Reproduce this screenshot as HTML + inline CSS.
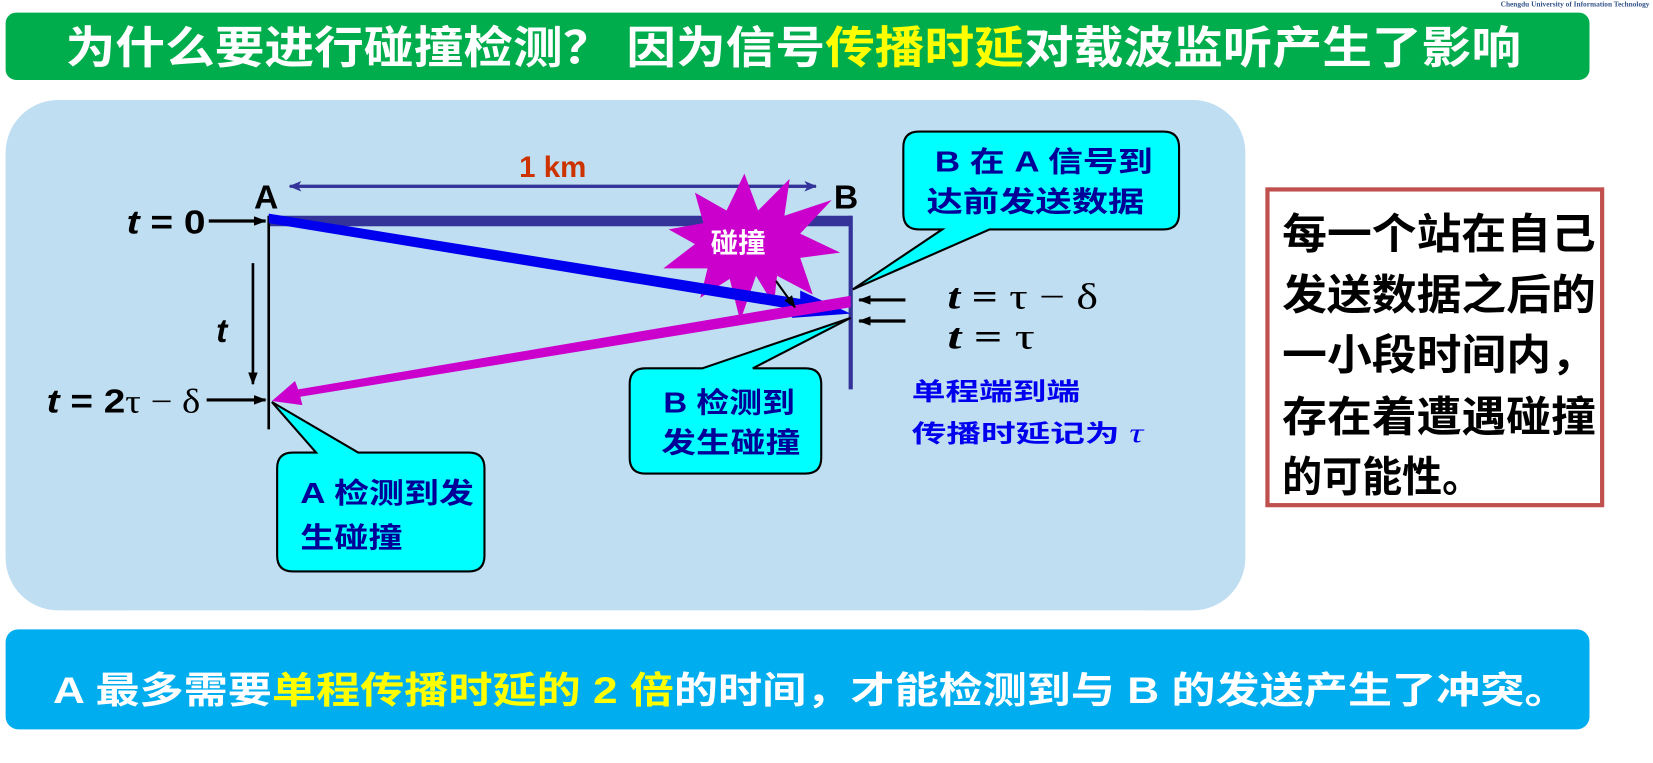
<!DOCTYPE html>
<html><head><meta charset="utf-8"><style>
html,body{margin:0;padding:0;background:#fff;width:1653px;height:763px;overflow:hidden}
svg{display:block}
.cj{font-family:"Liberation Sans","Noto Sans CJK SC",sans-serif;font-weight:bold}
.sr{font-family:"Liberation Serif","DejaVu Serif",serif}
</style></head><body>
<svg width="1653" height="763" viewBox="0 0 1570 725" xmlns="http://www.w3.org/2000/svg">
<defs>
<marker id="ah" markerWidth="12" markerHeight="9" refX="11" refY="4.5" orient="auto" markerUnits="userSpaceOnUse"><path d="M0,0 L12,4.5 L0,9 Z" fill="#000"/></marker>
<marker id="ahb" markerWidth="12" markerHeight="10" refX="11" refY="5" orient="auto" markerUnits="userSpaceOnUse"><path d="M0,0 L12,5 L0,10 L3,5 Z" fill="#333399"/></marker>
</defs>
<text x="1567" y="6" font-family="Liberation Serif,serif" font-size="7" font-weight="bold" fill="#34558b" text-anchor="end">Chengdu University of Information Technology</text>
<rect x="5" y="12" width="1505" height="64" rx="10" fill="#00ad4c"/>
<text class="cj" x="62" y="60" font-size="42" fill="#fff" textLength="1383" lengthAdjust="spacingAndGlyphs">为什么要进行碰撞检测？ 因为信号<tspan fill="#ffff00">传播时延</tspan>对载波监听产生了影响</text>
<rect x="5" y="95" width="1178" height="485" rx="50" fill="#bfdef2"/>
<rect x="1204" y="180" width="318" height="300" fill="#fff" stroke="#c0504d" stroke-width="4"/>
<g class="cj" font-size="40" fill="#000">
<text x="1218" y="236" textLength="298" lengthAdjust="spacingAndGlyphs">每一个站在自己</text>
<text x="1218" y="294" textLength="298" lengthAdjust="spacingAndGlyphs">发送数据之后的</text>
<text x="1218" y="351" textLength="298" lengthAdjust="spacingAndGlyphs">一小段时间内，</text>
<text x="1218" y="410" textLength="298" lengthAdjust="spacingAndGlyphs">存在着遭遇碰撞</text>
<text x="1218" y="467" textLength="190" lengthAdjust="spacingAndGlyphs">的可能性。</text>
</g>
<rect x="5" y="598" width="1505" height="95" rx="12" fill="#00aeef"/>
<text class="cj" x="50" y="668" font-size="35" fill="#fff" textLength="1440" lengthAdjust="spacingAndGlyphs">A 最多需要<tspan fill="#ffff00">单程传播时延的 2 倍</tspan>的时间，才能检测到与 B 的发送产生了冲突。</text>

<text class="cj" x="493" y="168" font-size="28" fill="#cc3300">1 km</text>
<line x1="285" y1="177" x2="775" y2="177" stroke="#333399" stroke-width="3" marker-end="url(#ahb)"/>
<line x1="765" y1="177" x2="275" y2="177" stroke="#333399" stroke-width="3" marker-end="url(#ahb)"/>
<text class="cj" x="241" y="198" font-size="32" fill="#000">A</text>
<text class="cj" x="792" y="198" font-size="32" fill="#000">B</text>
<rect x="255" y="205" width="554" height="10" fill="#333399"/>
<line x1="255" y1="205" x2="255" y2="408" stroke="#000" stroke-width="2.5"/>
<line x1="808" y1="205" x2="808" y2="370" stroke="#333399" stroke-width="4"/>
<polygon fill="#cc00cc" points="707,165 720,200 750,170 745,205 790,190 760,222 798,240 760,245 772,280 738,262 735,290 718,262 703,305 693,265 665,283 672,255 630,255 660,232 635,218 668,212 660,183 690,200"/>
<text class="cj" x="675" y="240" font-size="26" fill="#fff">碰撞</text>
<polygon fill="#0000ee" points="255,203 760,284 760,276 808,298 752,302 754,294 255,212"/>
<polygon fill="#cc00cc" points="808,281 808,292 285,377 287,385 258,381 280,362 283,370"/>
<line x1="737" y1="267" x2="755" y2="292" stroke="#000" stroke-width="2" marker-end="url(#ah)"/>
<path d="M873,125 H1105 Q1120,125 1120,140 V203 Q1120,218 1105,218 H940 L810,275 L895,218 H873 Q858,218 858,203 V140 Q858,125 873,125 Z" fill="#00ffff" stroke="#000" stroke-width="2"/>
<g class="cj" font-size="27" fill="#000099">
<text x="888" y="163" textLength="207" lengthAdjust="spacingAndGlyphs">B 在 A 信号到</text>
<text x="880" y="201" textLength="207" lengthAdjust="spacingAndGlyphs">达前发送数据</text>
</g>
<path d="M613,350 H667 L808,302 L715,350 H765 Q780,350 780,365 V435 Q780,450 765,450 H613 Q598,450 598,435 V365 Q598,350 613,350 Z" fill="#00ffff" stroke="#000" stroke-width="2"/>
<g class="cj" font-size="27" fill="#000099">
<text x="630" y="392" textLength="125" lengthAdjust="spacingAndGlyphs">B 检测到</text>
<text x="628" y="430" textLength="132" lengthAdjust="spacingAndGlyphs">发生碰撞</text>
</g>
<path d="M278,430 H300 L258,382 L340,430 H445 Q460,430 460,445 V528 Q460,543 445,543 H278 Q263,543 263,528 V445 Q263,430 278,430 Z" fill="#00ffff" stroke="#000" stroke-width="2"/>
<g class="cj" font-size="27" fill="#000099">
<text x="285" y="478" textLength="165" lengthAdjust="spacingAndGlyphs">A 检测到发</text>
<text x="285" y="520" textLength="97" lengthAdjust="spacingAndGlyphs">生碰撞</text>
</g>
<text x="120" y="222" font-size="32" fill="#000" font-family="Liberation Sans,sans-serif" font-weight="bold" textLength="75" lengthAdjust="spacingAndGlyphs"><tspan font-style="italic">t</tspan> = 0</text>
<line x1="198" y1="210" x2="252" y2="210" stroke="#000" stroke-width="3" marker-end="url(#ah)"/>
<text x="44" y="392" font-size="32" fill="#000" font-family="Liberation Sans,sans-serif" font-weight="bold" textLength="146" lengthAdjust="spacingAndGlyphs"><tspan font-style="italic">t</tspan> = 2<tspan class="sr" font-weight="normal">τ − δ</tspan></text>
<line x1="196" y1="380" x2="252" y2="380" stroke="#000" stroke-width="3" marker-end="url(#ah)"/>
<text x="205" y="325" font-size="32" fill="#000" font-family="Liberation Sans,sans-serif" font-weight="bold" font-style="italic">t</text>
<line x1="240" y1="250" x2="240" y2="365" stroke="#000" stroke-width="2.5" marker-end="url(#ah)"/>
<line x1="860" y1="285" x2="816" y2="285" stroke="#000" stroke-width="3" marker-end="url(#ah)"/>
<line x1="860" y1="305" x2="816" y2="305" stroke="#000" stroke-width="3" marker-end="url(#ah)"/>
<text x="900" y="293" font-size="34" fill="#000" font-family="Liberation Serif,serif" font-weight="bold" textLength="143" lengthAdjust="spacingAndGlyphs"><tspan font-style="italic">t</tspan> = <tspan font-weight="normal">τ − δ</tspan></text>
<text x="900" y="331" font-size="34" fill="#000" font-family="Liberation Serif,serif" font-weight="bold" textLength="83" lengthAdjust="spacingAndGlyphs"><tspan font-style="italic">t</tspan> = <tspan font-weight="normal">τ</tspan></text>
<g class="cj" font-size="23" fill="#0000ee">
<text x="866" y="380" textLength="160" lengthAdjust="spacingAndGlyphs">单程端到端</text>
<text x="866" y="420" textLength="220" lengthAdjust="spacingAndGlyphs">传播时延记为 <tspan class="sr" font-style="italic" font-weight="normal" font-size="26">τ</tspan></text>
</g>
</svg>
</body></html>
